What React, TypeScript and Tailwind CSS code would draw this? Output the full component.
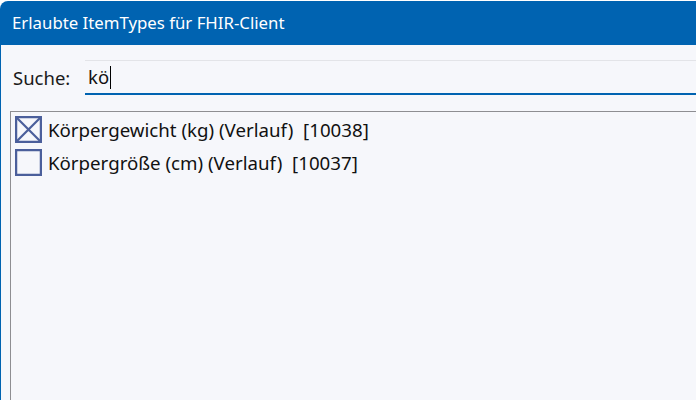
import { useState } from 'react'

const items = [
  { id: 10038, label: 'Körpergewicht (kg) (Verlauf)', checked: true },
  { id: 10037, label: 'Körpergröße (cm) (Verlauf)', checked: false },
]

const Box = ({ checked }: { checked: boolean }) => (
  <svg width="27" height="27" viewBox="0 0 27 27" className="shrink-0">
    <rect x="1" y="1" width="25" height="25" fill="none" stroke="#4b5f9b" strokeWidth="2.5" />
    {checked && (
      <path d="M2 2 L25 25 M25 2 L2 25" stroke="#4b5f9b" strokeWidth="2.2" />
    )}
  </svg>
)

export default function App() {
  const [query] = useState('kö')

  return (
    <div
      className="w-[696px] h-[400px] overflow-hidden bg-white flex flex-col pt-px"
      style={{ fontFamily: '"Noto Sans", "Open Sans", sans-serif' }}
    >
      <div className="flex-1 flex flex-col rounded-tl-[8px] overflow-hidden bg-[#0063b1]">
        {/* title bar */}
        <div className="h-[44px] shrink-0 flex items-center pl-[12px] text-white text-[16.8px]">
          Erlaubte ItemTypes für FHIR-Client
        </div>

        <div className="flex-1 flex flex-col bg-[#f6f7fb] ml-px">
          {/* search */}
          <div className="flex items-center mt-[15px] h-[35px]">
            <span className="w-[84px] pl-[12px] text-[18.5px] text-[#1a1a1a]">Suche:</span>
            <div className="flex-1 h-full flex items-center border-t border-[#e3e4e8] border-b-2 border-b-[#0063b1] pl-[3px]">
              <span className="text-[18.5px] text-[#111]">{query}</span>
              <span className="w-px h-[23px] bg-black ml-px" />
            </div>
          </div>

          {/* list */}
          <div className="flex-1 mt-[16px] ml-[9px] border-l border-t border-[#8e8e92] pt-[4px] pl-[4px] flex flex-col gap-[6px]">
            {items.map((it) => (
              <div key={it.id} className="flex items-center gap-[6px] text-[18.7px] leading-[27px] text-[#111]">
                <Box checked={it.checked} />
                <span className="whitespace-pre">{`${it.label}  [${it.id}]`}</span>
              </div>
            ))}
          </div>
        </div>
      </div>
    </div>
  )
}
